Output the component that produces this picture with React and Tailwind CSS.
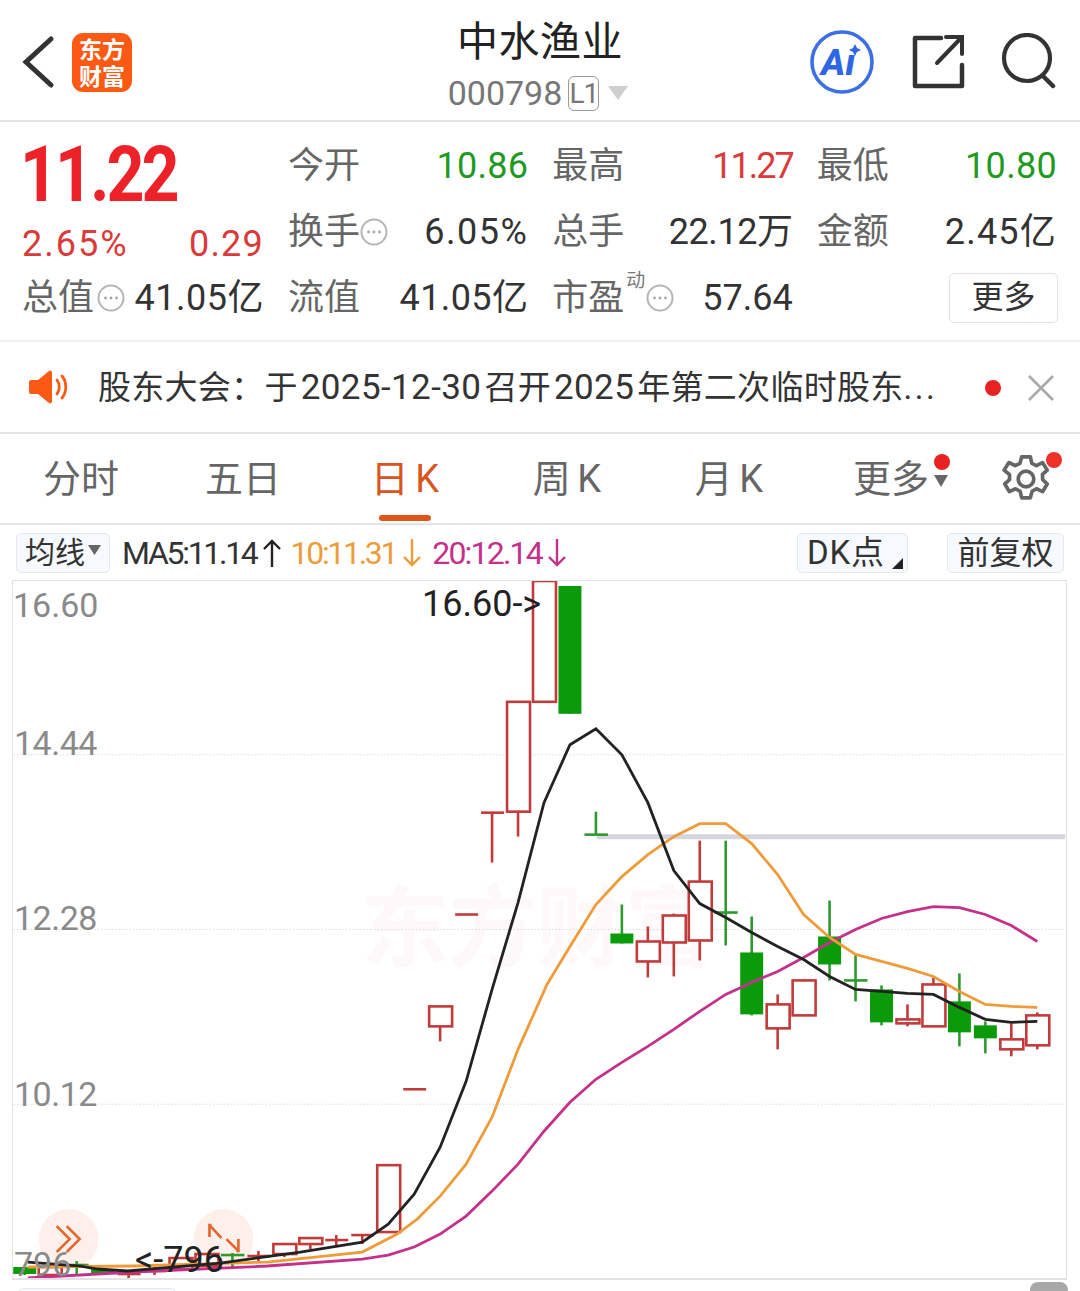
import React from "react";

const red = "#c23b3b";
const green = "#0a9a0a";
const greenLine = "#2e9a2e";

// x, boxTop, boxBottom, wickTop, wickBottom
const reds = [
  [1038, 1016, 1046, 1013, 1050], [1012, 1040, 1050, 1024, 1057], [934, 985, 1027, 977, 1027],
  [908, 1020, 1024, 1005, 1027], [804, 981, 1016, 980, 1016], [778, 1005, 1029, 995, 1050],
  [700, 882, 941, 841, 961], [674, 916, 943, 914, 977], [648, 942, 962, 927, 978],
  [544, 581, 702, 581, 702], [518, 702, 812, 702, 837], [440, 1007, 1027, 1007, 1042],
  [388, 1166, 1233, 1166, 1233], [310, 1239, 1245, 1239, 1250], [284, 1245, 1255, 1245, 1258],
  [206, 1255, 1267, 1255, 1268], [180, 1259, 1270, 1259, 1270], [49, 1268, 1276, 1266, 1278],
];
const redBars = [
  [492, 813, 813, 863], [466, 915, 915, 915], [414, 1090, 1090, 1090], [362, 1236, 1236, 1245],
  [336, 1241, 1236, 1247], [258, 1257, 1252, 1262], [154, 1272, 1268, 1276], [128, 1275, 1275, 1282],
];
const greens = [
  [986, 1026, 1039, 1022, 1054], [960, 1002, 1033, 974, 1047], [882, 990, 1023, 986, 1026],
  [830, 937, 965, 901, 981], [752, 953, 1015, 917, 1016], [622, 934, 944, 905, 944],
  [570, 586, 714, 586, 714], [102, 1270, 1275, 1270, 1275], [24, 1268, 1275, 1268, 1276],
];
const greenBars = [
  [856, 981, 955, 1002], [726, 913, 841, 946], [596, 835, 812, 835], [232, 1256, 1254, 1270], [76, 1266, 1262, 1276],
];

const black = "27,1263 80,1267 97,1270 127,1272 220,1264 300,1253 362,1243 388,1225 414,1195 440,1148 466,1082 492,990 518,903 544,803 570,745 596,729 622,755 648,803 674,871 700,904 726,918 752,933 778,947 804,960 830,977 856,990 882,992 908,994 934,995 960,1008 986,1020 1012,1023 1038,1022";
const orange = "27,1268 133,1267 267,1263 362,1253 397,1235 417,1220 440,1197 466,1165 492,1118 518,1050 547,985 570,947 596,905 622,877 648,855 674,837 700,824 726,824 752,844 778,875 804,915 830,938 856,955 882,962 908,969 934,977 960,992 986,1005 1012,1007 1038,1008";
const magenta = "27,1279 133,1273 267,1267 362,1260 388,1256 414,1248 440,1235 466,1217 492,1192 518,1165 544,1132 570,1103 596,1080 622,1063 648,1047 674,1030 700,1012 726,995 752,983 778,972 804,958 830,943 856,930 882,919 908,912 934,907 960,908 986,915 1012,926 1038,942";

function Chart() {
  return (
    <svg viewBox="13 581 1053 698" className="block w-full h-full relative">
      <circle cx="68" cy="1240" r="30" fill="#fdeee9" fillOpacity="0.9" />
      <circle cx="223" cy="1240" r="30" fill="#fdeee9" fillOpacity="0.9" />
      <path d="M59 1227l13 13-13 13M69 1227l13 13-13 13" fill="none" stroke="#e2672e" strokeWidth="2.600" transform="translate(-3,0)" />
      <path d="M211 1226h-2v12M210 1227l11 12M236 1252h2v-12M237 1251l-11-11" fill="none" stroke="#e2672e" strokeWidth="2.600" />
      {[755, 930, 1105].map((y) => (
        <line key={y} x1="13" x2="1066" y1={y} y2={y} stroke="#dcdcdc" strokeWidth="1" strokeDasharray="1.500 2" />
      ))}
      <line x1="597" x2="1066" y1="837" y2="837" stroke="#d5d5dd" strokeWidth="5" />
      {reds.map(([x, a, b, c, d]) => (
        <g key={x} stroke={red} strokeWidth="2.600">
          <line x1={x} x2={x} y1={c} y2={d} />
          <rect x={x - 11} y={a} width="23" height={b - a} fill="#fff" />
        </g>
      ))}
      {redBars.map(([x, y, c, d]) => (
        <g key={x} stroke={red} strokeWidth="2.600">
          <line x1={x - 11} x2={x + 12} y1={y} y2={y} />
          <line x1={x} x2={x} y1={c} y2={d} />
        </g>
      ))}
      {greens.map(([x, a, b, c, d]) => (
        <g key={x}>
          <line x1={x} x2={x} y1={c} y2={d} stroke={greenLine} strokeWidth="2.600" />
          <rect x={x - 11.5} y={a} width="23" height={b - a} fill={green} />
        </g>
      ))}
      {greenBars.map(([x, y, c, d]) => (
        <g key={x} stroke={greenLine} strokeWidth="2.600">
          <line x1={x - 11.5} x2={x + 12} y1={y} y2={y} />
          <line x1={x} x2={x} y1={c} y2={d} />
        </g>
      ))}
      <polyline points={magenta} fill="none" stroke="#c4308a" strokeWidth="2.800" />
      <polyline points={orange} fill="none" stroke="#ee9c3a" strokeWidth="2.800" />
      <polyline points={black} fill="none" stroke="#222" strokeWidth="2.800" />
    </svg>
  );
}

function Dots({ className = "" }) {
  return (
    <svg width="28" height="28" viewBox="0 0 28 28" className={"shrink-0 " + className}>
      <circle cx="14" cy="14" r="12.500" fill="none" stroke="#b5b5b5" strokeWidth="2" />
      <circle cx="8.500" cy="14" r="1.400" fill="#a5a5a5" />
      <circle cx="14" cy="14" r="1.400" fill="#a5a5a5" />
      <circle cx="19.500" cy="14" r="1.400" fill="#a5a5a5" />
    </svg>
  );
}

function Cell({ label, icon, sup, value, color = "text-[#333]" }) {
  return (
    <div className="flex items-center justify-between h-[66px]">
      <div className="flex items-center text-[#666] relative">
        <span>{label}</span>
        {sup && <span className="absolute left-[74px] -top-[9px] text-[19px] leading-none text-[#777]">动</span>}
        {icon === "sup" && <Dots className="ml-[22px]" />}
        {icon === true && <Dots />}
      </div>
      <span className={color}>{value}</span>
    </div>
  );
}

function Arrow({ up, color, className = "" }) {
  return (
    <svg width="22" height="30" viewBox="0 0 22 30" className={"shrink-0 " + className}>
      {up ? (
        <path d="M11 29V3M3 11l8-8 8 8" fill="none" stroke={color} strokeWidth="2.400" />
      ) : (
        <path d="M11 1v26M3 19l8 8 8-8" fill="none" stroke={color} strokeWidth="2.400" />
      )}
    </svg>
  );
}

export default function App() {
  return (
    <div className="w-[1080px] h-[1291px] overflow-hidden bg-white font-['Roboto','Noto_Sans_CJK_SC',sans-serif] text-[#333]">
      {/* header */}
      <header className="h-[122px] border-b-2 border-[#e4e4e8] flex items-center relative pt-[4px]">
        <svg width="40" height="60" viewBox="0 0 40 60" className="ml-[18px] shrink-0">
          <path d="M33 11L8 34l25 23" transform="translate(0,-4)" fill="none" stroke="#333" strokeWidth="5" strokeLinecap="round" />
        </svg>
        <div className="ml-[14px] w-[60px] h-[59px] rounded-[11px] bg-[#fc5a14] text-white font-bold text-[23px] leading-[27px] text-center pt-[2px] font-['Noto_Sans_CJK_SC',serif]">
          <div>东方</div>
          <div>财富</div>
        </div>
        <div className="absolute left-0 right-0 top-[16px] flex flex-col items-center pointer-events-none">
          <div className="text-[41px] leading-[52px] text-[#222] tracking-[0.5px]">中水渔业</div>
          <div className="flex items-center h-[38px] mt-[6px] -ml-[4px] text-[#777]">
            <span className="text-[34px] leading-none">000798</span>
            <span className="ml-[6px] w-[31px] h-[35px] border border-[#999] rounded-[6px] text-[28px] leading-[33px] text-center tracking-[-1px]">L1</span>
            <svg width="20" height="14" viewBox="0 0 20 14" className="ml-[9px]"><path d="M0 0h20L10 14z" fill="#cfcfcf" /></svg>
          </div>
        </div>
        <div className="ml-auto mr-[24px] flex items-center">
          <svg width="66" height="66" viewBox="0 0 66 66" className="shrink-0 -ml-[1px]">
            <circle cx="32" cy="33" r="30" fill="#fff" stroke="#3c6fe3" strokeWidth="3.600" />
            <text x="11" y="46" fontSize="37" fontWeight="800" fontStyle="italic" fontFamily="Roboto" fill="#2e66e6">Aı</text>
            <path d="M45 15l2 4 4 2-4 2-2 4-2-4-4-2 4-2z" fill="#2e66e6" />
          </svg>
          <svg width="56" height="58" viewBox="0 0 56 58" className="ml-[36px] shrink-0">
            <path d="M29 5H3v48h47V32" fill="none" stroke="#333" strokeWidth="4.500" strokeLinejoin="round" strokeLinecap="round" />
            <path d="M25 30L49 5M34 4h16v17" fill="none" stroke="#333" strokeWidth="4" strokeLinecap="round" />
          </svg>
          <svg width="56" height="58" viewBox="0 0 56 58" className="ml-[32px] shrink-0">
            <circle cx="27" cy="25" r="23" fill="none" stroke="#333" strokeWidth="4.200" />
            <path d="M43 43l10 10" fill="none" stroke="#333" strokeWidth="4.500" strokeLinecap="round" />
          </svg>
        </div>
      </header>

      {/* quote */}
      <section className="h-[220px] flex pl-[22px] pr-[23px] pt-[11px] text-[36px] leading-none border-b-2 border-[#efeff2]">
        <div className="w-[242px] shrink-0 flex flex-col">
          <div className="h-[66px] text-[78px] font-bold text-[#ed2128] tracking-[-3.500px] leading-[66px] -ml-[2px] mt-[9px] origin-left scale-x-[0.85]">11.22</div>
          <div className="h-[57px] flex items-end justify-between text-[#d93a3a] pb-[3px] -mb-[1px]">
            <span className="tracking-[2px]">2.65%</span>
            <span className="tracking-[1.200px]">0.29</span>
          </div>
          <div className="h-[67px] flex items-center justify-between">
            <span className="flex items-center text-[#666]">总值<Dots className="ml-[3px]" /></span>
            <span className="tracking-[0.500px]">41.05亿</span>
          </div>
        </div>
        <div className="ml-[24px] flex-1 grid grid-cols-3 gap-x-[24px] content-start">
          <Cell label="今开" value="10.86" color="text-[#1f9a1f] tracking-[0.300px]" />
          <Cell label="最高" value="11.27" color="text-[#d93a3a] tracking-[-2px]" />
          <Cell label="最低" value="10.80" color="text-[#1f9a1f] tracking-[0.300px]" />
          <Cell label="换手" icon value="6.05%" color="text-[#333] tracking-[1.500px]" />
          <Cell label="总手" value="22.12万" color="text-[#333] tracking-[-0.400px]" />
          <Cell label="金额" value="2.45亿" color="text-[#333] tracking-[1.200px]" />
          <Cell label="流值" value="41.05亿" color="text-[#333] tracking-[0.400px]" />
          <Cell label="市盈" sup icon="sup" value="57.64" />
          <div className="flex items-center justify-end h-[66px] -mr-[1px]">
            <span className="w-[109px] h-[50px] rounded-[5px] border border-[#e2e2e6] text-[32px] leading-[46px] text-center">更多</span>
          </div>
        </div>
      </section>

      {/* notice */}
      <section className="h-[92px] flex items-center border-b-2 border-[#e6e6e9] relative">
        <svg width="40" height="36" viewBox="0 0 40 36" className="ml-[29px] shrink-0">
          <path d="M2 11h7L20 2c1-.8 3-.5 3 2v28c0 2.500-2 2.800-3 2L9 25H2c-1 0-2-1-2-2V13c0-1 1-2 2-2z" fill="#fc5a14" />
          <path d="M28 11c3 4 3 10 0 14M33 7c5 6 5 16 0 22" fill="none" stroke="#fc5a14" strokeWidth="2.800" strokeLinecap="round" />
        </svg>
        <span className="ml-[29px] text-[33px] leading-none whitespace-nowrap tracking-[0.280px]">
          股东大会：于<span className="text-[35px] mx-[3px] tracking-[0.400px]">2025-12-30</span>召开<span className="text-[35px] mx-[3px] tracking-[0.400px]">2025</span>年第二次临时股东<span className="tracking-[2.500px]">...</span>
        </span>
        <span className="absolute left-[985px] top-[38px] w-[16px] h-[16px] rounded-full bg-[#e82222]" />
        <svg width="28" height="28" viewBox="0 0 28 28" className="absolute left-[1027px] top-[32px]">
          <path d="M2 2l24 24M26 2L2 26" fill="none" stroke="#ababab" strokeWidth="2.800" />
        </svg>
      </section>

      {/* tabs */}
      <nav className="h-[91px] flex border-b-2 border-[#e4e4e8] text-[38px] leading-none text-[#666] relative [word-spacing:-3px]">
        <div className="w-[972px] grid grid-cols-6 items-center text-center pt-[1px]">
          <span>分时</span>
          <span>五日</span>
          <span className="relative text-[#d9551e]">
            日 K
            <span className="absolute left-[55px] bottom-[-23px] w-[52px] h-[6px] rounded-full bg-[#e0561a]" />
          </span>
          <span>周 K</span>
          <span>月 K</span>
          <span className="relative">
            更多
            <span className="absolute left-[124px] top-[-6px] w-[16px] h-[16px] rounded-full bg-[#e82222]" />
            <svg width="14" height="12" viewBox="0 0 14 12" className="absolute left-[124px] top-[15px]"><path d="M0 0h14L7 12z" fill="#666" /></svg>
          </span>
        </div>
        <div className="flex-1 relative">
          <svg width="52" height="54" viewBox="0 0 24 24" className="absolute left-[28px] top-[18px]" fill="none" stroke="#666" strokeWidth="1.700" strokeLinejoin="round">
            <path d="M10 1.800h4l.7 3 2.100 1 2.800-1.400 2.200 3.500-2.200 2 .1 2.400 2.100 2-2.100 3.500-2.900-1.300-2 1.200-.8 3h-4l-.7-3-2.100-1.200-2.900 1.300-2.100-3.500 2.200-2V10L1.900 7.900l2.200-3.500L7 5.800l2.200-1z" />
            <circle cx="12" cy="12" r="3.600" />
          </svg>
          <span className="absolute left-[74px] top-[18px] w-[16px] h-[16px] rounded-full bg-[#ee3228]" />
        </div>
      </nav>

      {/* MA row */}
      <div className="h-[55px] flex items-center relative pl-[16px] text-[32px] leading-none">
        <span className="w-[94px] h-[40px] rounded-[5px] border border-[#e4e9f0] bg-[#f6f9fd] text-[30px] leading-[38px] pl-[8px] flex items-center">
          均线
          <svg width="13" height="10" viewBox="0 0 13 10" className="ml-[3px] -mt-[6px]"><path d="M0 0h13L6.500 10z" fill="#666" /></svg>
        </span>
        <span className="ml-[12px] tracking-[-2.300px]">MA5:11.14</span>
        <Arrow up color="#222" className="ml-[4px]" />
        <span className="ml-[8px] tracking-[-2.300px] text-[#ee9c3a]">10:11.31</span>
        <Arrow color="#ee9c3a" className="ml-[5px]" />
        <span className="ml-[9px] tracking-[-1.800px] text-[#c4308a]">20:12.14</span>
        <Arrow color="#c4308a" className="ml-[4px]" />
        <span className="ml-auto w-[111px] h-[40px] rounded-[5px] border border-[#e4e9f0] bg-[#f6f9fd] pl-[9px] text-[33px] leading-[38px] relative tracking-[0.800px]">
          DK点
          <svg width="11" height="11" viewBox="0 0 11 11" className="absolute right-[4px] bottom-[3px]"><path d="M11 0v11H0z" fill="#222" /></svg>
        </span>
        <span className="ml-[39px] mr-[16px] w-[117px] h-[40px] rounded-[5px] border border-[#e4e9f0] bg-[#f6f9fd] text-center text-[32px] leading-[38px]">前复权</span>
      </div>

      {/* chart */}
      <div className="ml-[12px] w-[1055px] h-[700px] border-x border-t border-b-2 border-[#e2e2e6] relative">
        <div className="absolute left-[348px] top-[304px] text-[88px] leading-none font-bold text-[#fff8fb] whitespace-nowrap">东方财富</div>
        <Chart />
        <span className="absolute left-0 top-[7px] text-[34px] leading-none text-[#8a8a8a]">16.60</span>
        <span className="absolute left-[1px] top-[145px] text-[34px] leading-none text-[#8a8a8a] tracking-[-0.500px]">14.44</span>
        <span className="absolute left-[1px] top-[320px] text-[34px] leading-none text-[#8a8a8a] tracking-[-0.500px]">12.28</span>
        <span className="absolute left-[1px] top-[496px] text-[34px] leading-none text-[#8a8a8a] tracking-[-0.500px]">10.12</span>
        <span className="absolute left-[1px] top-[666px] text-[34px] leading-none text-[#8a8a8a]">796</span>
        <span className="absolute left-[409px] top-[5px] text-[36px] leading-none text-[#222]">16.60-&gt;</span>
        <span className="absolute left-[122px] top-[661px] text-[36px] leading-none text-[#222]">&lt;-796</span>
      </div>

      {/* next panel sliver */}
      <div className="relative h-[11px]">
        <span className="absolute left-[18px] top-[8px] w-[158px] h-[6px] rounded-t-[5px] border border-[#e4e9f0] bg-[#f6f9fd]" />
        <span className="absolute left-[1030px] top-[2px] w-[38px] h-[12px] rounded-t-[8px] bg-[#a8a8a8]" />
      </div>
    </div>
  );
}
